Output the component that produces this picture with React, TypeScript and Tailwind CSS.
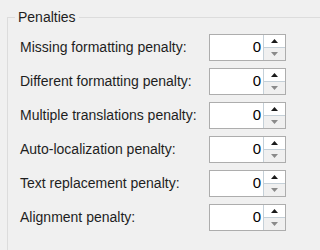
import React from 'react';

const rows = [
  'Missing formatting penalty:',
  'Different formatting penalty:',
  'Multiple translations penalty:',
  'Auto-localization penalty:',
  'Text replacement penalty:',
  'Alignment penalty:',
];

function Spinner({ value }: { value: number }) {
  return (
    <div className="flex h-[27px] w-[77px] border border-[#adadad] bg-white">
      <div className="flex flex-1 items-center justify-end pr-[2px] text-[15px] text-black">{value}</div>
      <div className="flex w-[22px] flex-col border-l border-[#c5d0d8]">
        <div className="flex flex-1 items-center justify-center bg-white">
          <svg width="7" height="4" viewBox="0 0 7 4"><path d="M0 4 L3.5 0 L7 4 Z" fill="#1a1a1a" /></svg>
        </div>
        <div className="flex flex-1 items-center justify-center border-t border-[#c5d0d8] bg-[#f0f0f0]">
          <svg width="7" height="4" viewBox="0 0 7 4"><path d="M0 0 L3.5 4 L7 0 Z" fill="#8a8a8a" /></svg>
        </div>
      </div>
    </div>
  );
}

export default function App() {
  return (
    <div className="h-[250px] w-[320px] overflow-hidden bg-[#f0f0f0] pl-[7px] pt-[8px] font-['Liberation_Sans',sans-serif] text-[#1e1e1e]">
      <fieldset className="h-[300px] w-[330px] border border-[#dcdcdc] pl-[12px] pt-[8px]">
        <legend className="-ml-[5px] px-[3px] text-[14px] leading-[18px]">Penalties</legend>
        <div className="flex flex-col gap-[7px]">
          {rows.map((r) => (
            <div key={r} className="flex h-[27px] items-center">
              <div className="w-[189px] whitespace-nowrap text-[14px]">{r}</div>
              <Spinner value={0} />
            </div>
          ))}
        </div>
      </fieldset>
    </div>
  );
}
